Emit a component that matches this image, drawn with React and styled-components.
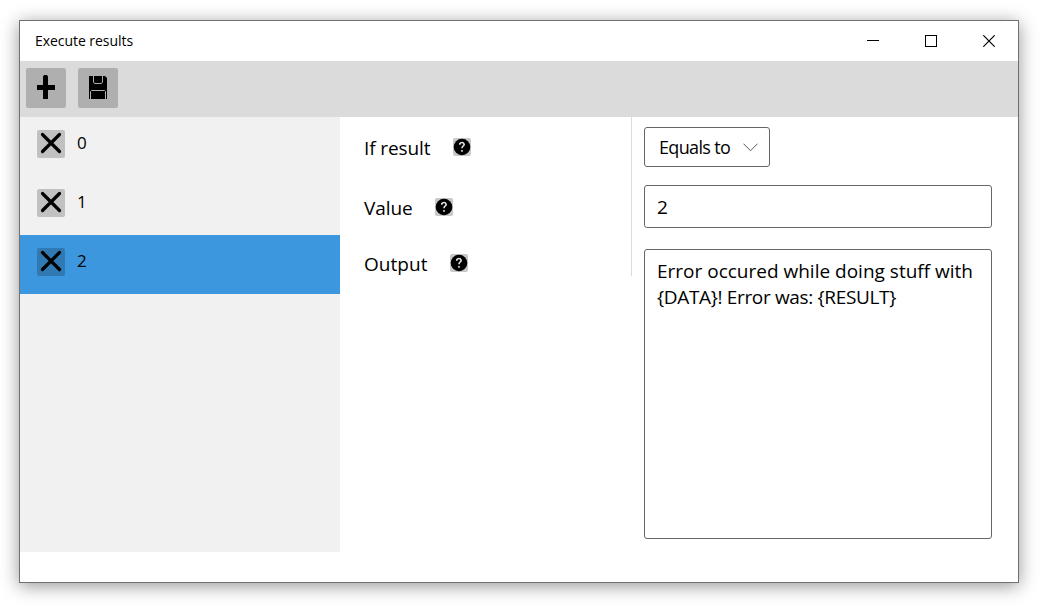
import React from "react";
import styled, { createGlobalStyle } from "styled-components";

const GlobalStyle = createGlobalStyle`
  * { box-sizing: border-box; }
  body { margin: 0; background: #fff; overflow: hidden; }
  button, input { font: inherit; color: inherit; letter-spacing: inherit; margin: 0; }
  svg { display: block; }
`;

const Desktop = styled.div`
  width: 1043px;
  height: 611px;
  padding: 20px 24px 28px 19px;
  font-family: "Segoe UI", "Open Sans", "Noto Sans", sans-serif;
  font-weight: 370;
  color: #000;
`;

const Window = styled.main`
  width: 1000px;
  height: 563px;
  border: 1px solid #707070;
  background: #fff;
  box-shadow: 0 3px 17px rgba(0, 0, 0, 0.42);
`;

const TitleBar = styled.header`
  height: 40px;
  display: flex;
  align-items: center;
  padding-left: 15px;
`;

const Title = styled.h1`
  flex: 1;
  margin: 0;
  font-size: 14px;
  line-height: 20px;
  font-weight: inherit;
  letter-spacing: -0.05px;
`;

const CaptionButton = styled.button`
  width: 58px;
  height: 40px;
  padding: 0;
  border: 0;
  background: transparent;
  display: grid;
  place-items: center;
`;

const Toolbar = styled.nav`
  height: 56px;
  padding: 7px 6px;
  display: flex;
  gap: 12px;
  background: #dbdbdb;
`;

const ToolButton = styled.button`
  width: 40px;
  height: 40px;
  padding: 0;
  border: 0;
  border-radius: 2px;
  background: #afafaf;
`;

const Body = styled.div`
  display: flex;
  align-items: flex-start;
`;

const Sidebar = styled.ul`
  width: 320px;
  height: 435px;
  margin: 0;
  padding: 0;
  list-style: none;
  background: #f1f1f1;
`;

const ResultRow = styled.li`
  height: 59px;
  padding: 13px 17px;
  display: flex;
  gap: 12px;
  font-size: 17px;
  line-height: 25px;
  background: ${(p) => (p.$selected ? "#3c97de" : "transparent")};
`;

const RemoveButton = styled.button`
  width: 28px;
  height: 28px;
  padding: 0;
  border: 0;
  border-radius: 2px;
  background: ${(p) => (p.$selected ? "#3079b2" : "#c1c1c1")};
`;

const Labels = styled.div`
  width: 292px;
  height: 159px;
  padding: 17px 0 0 24px;
  border-right: 1px solid #dbdbdb;
`;

const LabelRow = styled.div`
  height: ${(p) => p.$height}px;
  display: flex;
  align-items: flex-start;
`;

const Label = styled.label`
  width: ${(p) => p.$width}px;
  font-size: 19px;
  line-height: 28px;
  letter-spacing: ${(p) => p.$spacing}px;
  white-space: nowrap;
`;

const Help = styled.button`
  width: 18px;
  height: 18px;
  margin-top: 4px;
  padding: 0;
  border: 0;
  border-radius: 2px;
  background: #c8c8c8;
`;

const Fields = styled.div`
  padding: 10px 0 0 12px;
  display: flex;
  flex-direction: column;
  align-items: flex-start;
`;

const Select = styled.button`
  width: 126px;
  height: 40px;
  padding: 0 11px 0 14px;
  display: flex;
  align-items: center;
  justify-content: space-between;
  border: 1px solid #666;
  border-radius: 3px;
  background: #fff;
`;

const SelectText = styled.span`
  font-size: 18px;
  letter-spacing: -0.65px;
  white-space: nowrap;
`;

const ValueInput = styled.input`
  width: 348px;
  height: 43px;
  margin-top: 18px;
  padding: 0 12px;
  border: 1px solid #666;
  border-radius: 3px;
  font-size: 19px;
`;

const OutputInput = styled.div`
  width: 348px;
  height: 290px;
  margin-top: 21px;
  padding: 8px 12px;
  border: 1px solid #666;
  border-radius: 3px;
  overflow: hidden;
  font-size: 19px;
  line-height: 26px;
  white-space: nowrap;
`;

const OutputLine = styled.div`
  letter-spacing: ${(p) => p.$spacing}px;
`;

const CrossIcon = () => (
  <svg width="28" height="28" viewBox="0 0 28 28">
    <path d="M5.5 4.5 22.5 21.5M22.5 4.5 5.5 21.5" stroke="#000" strokeWidth="3.2" strokeLinecap="round" />
  </svg>
);

const HelpIcon = () => (
  <svg width="18" height="18" viewBox="0 0 18 18">
    <circle cx="9" cy="9" r="8.3" fill="#000" />
    <path d="M6.8 6.7V5.7Q7.4 4.5 9 4.5T11.2 6.2C11.2 8 9 8 9 10.2M9 12v1.8" fill="none" stroke="#e4e4e4" strokeWidth="1.6" />
  </svg>
);

const rows = ["0", "1", "2"];
const labels = [
  { text: "If result", width: 89, height: 60, spacing: -0.1 },
  { text: "Value", width: 71, height: 56, spacing: -0.1 },
  { text: "Output", width: 86, height: 28, spacing: 0.05 },
];

export default function App() {
  return (
    <Desktop>
      <GlobalStyle />
      <Window>
        <TitleBar>
          <Title>Execute results</Title>
          <CaptionButton aria-label="Minimize">
            <svg width="12" height="12" shapeRendering="crispEdges"><path d="M0 5.5H12" stroke="#000" /></svg>
          </CaptionButton>
          <CaptionButton aria-label="Maximize">
            <svg width="12" height="12" shapeRendering="crispEdges"><path d="M.5 .5H11.5V11.5H.5Z" fill="none" stroke="#000" /></svg>
          </CaptionButton>
          <CaptionButton aria-label="Close">
            <svg width="12" height="12"><path d="M.3 .3 11.7 11.7M11.7 .3 .3 11.7" stroke="#000" strokeWidth="1.2" /></svg>
          </CaptionButton>
        </TitleBar>
        <Toolbar>
          <ToolButton aria-label="Add">
            <svg width="40" height="40">
              <path d="M17 8.5 18 7H21L22 8.5V17H29V22H22V31H17V22H11V17H17Z" fill="#000" />
            </svg>
          </ToolButton>
          <ToolButton aria-label="Save">
            <svg width="40" height="40">
              <path d="M11 8H27L29 10V31H11Z" fill="#000" />
              <path d="M15.5 8V14L16.5 15.5H23.5L24.5 14V8M12.5 31V23.5L13.5 22.5H26.5L27.5 23.5V31" fill="none" stroke="#afafaf" />
            </svg>
          </ToolButton>
        </Toolbar>
        <Body>
          <Sidebar>
            {rows.map((row) => (
              <ResultRow key={row} $selected={row === "2"}>
                <RemoveButton aria-label="Remove" $selected={row === "2"}><CrossIcon /></RemoveButton>
                <span>{row}</span>
              </ResultRow>
            ))}
          </Sidebar>
          <Labels>
            {labels.map((l) => (
              <LabelRow key={l.text} $height={l.height}>
                <Label $width={l.width} $spacing={l.spacing}>{l.text}</Label>
                <Help aria-label="Help"><HelpIcon /></Help>
              </LabelRow>
            ))}
          </Labels>
          <Fields>
            <Select>
              <SelectText>Equals to</SelectText>
              <svg width="15" height="9"><path d="M.5 .7 7.5 7.7 14.5 .7" fill="none" stroke="#555" /></svg>
            </Select>
            <ValueInput defaultValue="2" />
            <OutputInput role="textbox" aria-multiline="true">
              <OutputLine $spacing={0}>Error occured while doing stuff with</OutputLine>
              <OutputLine $spacing={-0.34}>{"{DATA}! Error was: {RESULT}"}</OutputLine>
            </OutputInput>
          </Fields>
        </Body>
      </Window>
    </Desktop>
  );
}
